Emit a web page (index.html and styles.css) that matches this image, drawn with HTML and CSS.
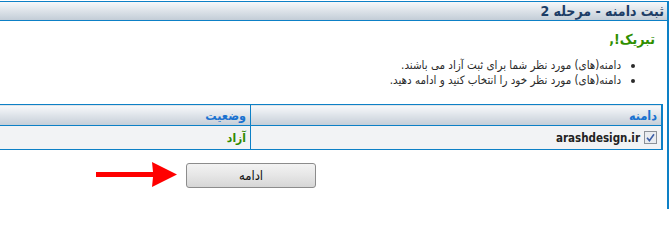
FILE: index.html
```html
<!DOCTYPE html>
<html lang="fa">
<head>
<meta charset="utf-8">
<title>ثبت دامنه</title>
<link rel="stylesheet" href="styles.css">
</head>
<body>
<div class="panel" dir="rtl">
  <div class="title">ثبت دامنه - مرحله 2</div>
  <div class="content">
    <p class="congrats">تبریک!,</p>
    <ul class="notes">
      <li>دامنه(های) مورد نظر شما برای ثبت آزاد می باشند.</li>
      <li>دامنه(های) مورد نظر خود را انتخاب کنید و ادامه دهید.</li>
    </ul>
    <table class="domains">
      <thead>
        <tr><th class="c-domain">دامنه</th><th class="c-status">وضعیت</th></tr>
      </thead>
      <tbody>
        <tr>
          <td class="c-domain"><span class="check"><svg viewBox="0 0 13 13" width="13" height="13"><rect x="0.5" y="0.5" width="12" height="12" fill="#e9ecf0" stroke="#8d9299"/><path d="M3 6.8 L5.4 9.6 L10 3.2" fill="none" stroke="#3d5fa8" stroke-width="1.6"/></svg></span><span class="domain-name">arashdesign.ir</span></td>
          <td class="c-status"><span class="free">آزاد</span></td>
        </tr>
      </tbody>
    </table>
    <div class="actions" dir="ltr">
      <svg class="arrow" viewBox="0 0 82 26" width="82" height="26"><path d="M0 10 L57 10 L56 0 L81 12.5 L56 25 L57 15 L0 15 Z" fill="#ff0000"/></svg>
      <button class="btn" type="button">ادامه</button>
    </div>
  </div>
</div>
</body>
</html>
```
FILE: styles.css
```css
html, body {
  margin: 0;
  padding: 0;
  background: #ffffff;
}
body {
  font-family: "DejaVu Sans Condensed", "DejaVu Sans", sans-serif;
  font-size: 11.5px;
  color: #333333;
}
.panel {
  width: 667px;
  margin-top: 1px;
  height: 208px;
  border-right: 2px solid #0d80c6;
}
.title {
  height: 18px;
  line-height: 18px;
  border-top: 1px solid #0d80c6;
  border-bottom: 1px solid #0d80c6;
  background: linear-gradient(#f6f8fa, #c3cdd7);
  color: #1d3d66;
  font-weight: bold;
  font-size: 14px;
  padding-right: 3px;
}
.content {
  padding: 0 4px 0 0;
}
.congrats {
  margin: 9px 8px 0 0;
  height: 18px;
  line-height: 18px;
  font-weight: bold;
  font-size: 14px;
  color: #2f8f00;
}
.notes {
  margin: 10px 0 0 0;
  padding: 0 42px 0 0;
  list-style: disc;
  line-height: 15px;
  color: #2b2b2b;
}
.domains {
  margin-top: 16px;
  width: 663px;
  border-collapse: collapse;
  border-top: 1px solid #0d80c6;
  border-bottom: 1px solid #0d80c6;
  border-right: 2px solid #0d80c6;
}
.domains th {
  height: 20px;
  padding: 0 4px 0 0;
  background: linear-gradient(#f8f9fb, #c4cdd7);
  color: #1a72d0;
  font-weight: bold;
  font-size: 12.5px;
  text-align: right;
  border-bottom: 1px solid #0d80c6;
}
.domains td {
  height: 23px;
  padding: 0 4px 0 0;
  background: #f2f3f5;
  text-align: right;
}
.domains .c-domain {
  width: 406px;
  border-left: 1px solid #0d80c6;
}
.check {
  display: inline-block;
  vertical-align: middle;
  margin-left: 4px;
  line-height: 0;
}
.domain-name {
  font-family: "DejaVu Sans Condensed", "DejaVu Sans", sans-serif;
  font-weight: bold;
  font-size: 11.5px;
  color: #222;
  vertical-align: middle;
}
.free {
  color: #2f8a00;
  font-weight: bold;
  font-size: 12px;
}
.actions {
  position: relative;
  margin-top: 13px;
  padding-left: 186px;
  height: 26px;
}
.arrow {
  position: absolute;
  left: 96px;
  top: -1px;
}
.btn {
  width: 130px;
  height: 25px;
  border: 1px solid #8c8c8c;
  border-radius: 3px;
  background: linear-gradient(#f3f3f3, #e6e6e6 50%, #d6d6d6);
  font-family: "DejaVu Sans Condensed", "DejaVu Sans", sans-serif;
  font-size: 13px;
  color: #111;
  padding: 0;
}
```
